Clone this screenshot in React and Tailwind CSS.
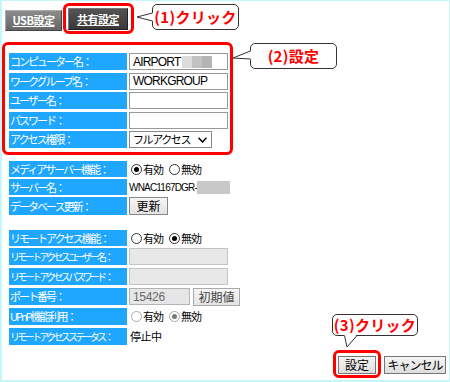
const jp = { fontFamily: '"Noto Sans CJK JP", "Liberation Sans", sans-serif' };
const latin = { fontFamily: '"Liberation Sans", Arial, sans-serif' };

function Label({ children, small }) {
  return (
    <div
      className={
        small
          ? 'w-[118px] h-full shrink-0 bg-[#1fa6ff] text-white flex items-center pl-[1px] text-[10px] tracking-[-2.7px] whitespace-nowrap overflow-hidden'
          : 'w-[118px] h-full shrink-0 bg-[#1fa6ff] text-white flex items-center pl-[1px] text-[11px] tracking-[-2px] whitespace-nowrap overflow-hidden'
      }
    >
      {children}
    </div>
  );
}

function Radio({ checked, disabled }) {
  return (
    <span
      className={
        disabled
          ? 'w-[11px] h-[11px] shrink-0 rounded-full border border-[#a8a8a8] bg-white flex items-center justify-center'
          : 'w-[11px] h-[11px] shrink-0 rounded-full border border-[#333] bg-white flex items-center justify-center'
      }
    >
      {checked && (
        <span className={disabled ? 'w-[5px] h-[5px] rounded-full bg-[#777]' : 'w-[5px] h-[5px] rounded-full bg-black'} />
      )}
    </span>
  );
}

function RadioPair({ on, disabled }) {
  return (
    <div className="flex items-center ml-[2px] text-[11px] tracking-[-1px] text-black">
      <Radio checked={on} disabled={disabled} />
      <span className="ml-[1px] w-[26px]">有効</span>
      <Radio checked={!on} disabled={disabled} />
      <span className="ml-[1px]">無効</span>
    </div>
  );
}

function Row({ h, children }) {
  return <div className={`flex gap-[2px] items-center ${h}`}>{children}</div>;
}

function Bubble({ children, className }) {
  return (
    <div
      className={`absolute bg-white border border-[#333] rounded-[5px] flex items-center justify-center text-[15px] font-bold text-[#ff0000] tracking-[0.3px] ${className}`}
      style={jp}
    >
      {children}
    </div>
  );
}

export default function App() {
  return (
    <div className="relative w-[450px] h-[382px] overflow-hidden bg-white" style={jp}>
      <div className="w-full h-full border-l-2 border-b-2 border-t border-r border-[#c6f6f8] flex flex-col">
        {/* tabs */}
        <div className="flex items-start mt-[7px] ml-[3px]">
          <div className="mt-[2px] w-[57px] h-[21px] bg-gradient-to-b from-[#8c8c8c] to-[#666] border-t border-l border-[#aaa] border-r border-b border-r-[#444] border-b-[#444] flex items-center justify-center">
            <span className="text-white text-[11px] font-bold underline tracking-[-0.5px]">USB設定</span>
          </div>
          <div className="ml-[6px] w-[60px] h-[22px] bg-gradient-to-b from-[#555] to-[#383838] border-t border-l border-[#777] border-r border-b border-r-[#222] border-b-[#222] flex items-center justify-center">
            <span className="text-white text-[11px] font-bold underline tracking-[-0.5px]">共有設定</span>
          </div>
        </div>

        {/* section 1 */}
        <div className="mt-[22px] ml-[7px] flex flex-col gap-[2.5px]">
          <Row h="h-[17px]">
            <Label>コンピューター名：</Label>
            <div className="w-[99px] h-full border border-[#999] bg-white flex items-center pl-[3px]">
              <span className="text-[12px] tracking-[-0.8px] text-black" style={latin}>AIRPORT</span>
              <span className="ml-[1px] flex h-[12px]">
                <span className="w-[10px] h-full bg-[#dcdcdc]" />
                <span className="w-[10px] h-full bg-[#c2c2c2]" />
                <span className="w-[10px] h-full bg-[#b4b4b4]" />
              </span>
            </div>
          </Row>
          <Row h="h-[17px]">
            <Label>ワークグループ名：</Label>
            <div className="w-[99px] h-full border border-[#999] bg-white flex items-center pl-[3px]">
              <span className="text-[12px] tracking-[-0.8px] text-black" style={latin}>WORKGROUP</span>
            </div>
          </Row>
          <Row h="h-[17px]">
            <Label>ユーザー名：</Label>
            <div className="w-[99px] h-full border border-[#999] bg-white" />
          </Row>
          <Row h="h-[17px]">
            <Label>パスワード：</Label>
            <div className="w-[99px] h-full border border-[#999] bg-white" />
          </Row>
          <Row h="h-[17px]">
            <Label>アクセス権限：</Label>
            <div className="w-[83px] h-full border border-[#888] bg-white flex items-center justify-between pl-[3px] pr-[4px]">
              <span className="text-[11px] tracking-[-1.4px] text-black">フルアクセス</span>
              <svg width="9" height="6" viewBox="0 0 9 6">
                <polyline points="0.5,0.8 4.5,5 8.5,0.8" fill="none" stroke="#000" strokeWidth="1.5" />
              </svg>
            </div>
          </Row>
        </div>

        {/* section 2 */}
        <div className="mt-[13px] ml-[7px] flex flex-col gap-[2px]">
          <Row h="h-[16px]">
            <Label>メディアサーバー機能：</Label>
            <RadioPair on />
          </Row>
          <Row h="h-[16px]">
            <Label>サーバー名：</Label>
            <div className="flex items-center">
              <span className="text-[10px] tracking-[-0.8px] text-black" style={latin}>WNAC1167DGR-</span>
              <span className="w-[33px] h-[13px] bg-[#c8c8c8]" />
            </div>
          </Row>
          <Row h="h-[18px]">
            <Label>データベース更新：</Label>
            <button className="w-[39px] h-[18px] border border-[#888] bg-gradient-to-b from-[#f6f6f6] to-[#e2e2e2] text-[12px] text-black leading-none">
              更新
            </button>
          </Row>
        </div>

        {/* section 3 */}
        <div className="mt-[15px] ml-[7px] flex flex-col">
          <Row h="h-[16px]">
            <Label>リモートアクセス機能：</Label>
            <RadioPair on={false} />
          </Row>
          <div className="mt-[2px] flex flex-col gap-[3px]">
            <Row h="h-[17px]">
              <Label small>リモートアクセスユーザー名：</Label>
              <div className="w-[99px] h-full border border-[#c4c4c4] bg-[#e8e8e8]" />
            </Row>
            <Row h="h-[17px]">
              <Label small>リモートアクセスパスワード：</Label>
              <div className="w-[99px] h-full border border-[#c4c4c4] bg-[#e8e8e8]" />
            </Row>
            <Row h="h-[17px]">
              <Label>ポート番号：</Label>
              <div className="w-[61px] h-full border border-[#b4b4b4] bg-[#e6e6e6] flex items-center pl-[3px]">
                <span className="text-[12px] text-[#6a6a6a] tracking-[-0.3px]" style={latin}>15426</span>
              </div>
              <button className="ml-[1px] w-[47px] h-[18px] border border-[#aaa] bg-gradient-to-b from-[#f6f6f6] to-[#e4e4e4] text-[12px] text-[#444] leading-none">
                初期値
              </button>
            </Row>
            <Row h="h-[17px]">
              <Label>UPnP機能利用：</Label>
              <RadioPair on={false} disabled />
            </Row>
            <Row h="h-[17px]">
              <Label small>リモートアクセスステータス：</Label>
              <span className="ml-[1px] text-[11px] tracking-[-0.5px] text-black">停止中</span>
            </Row>
          </div>
        </div>

        {/* buttons */}
        <div className="mt-[11px] mr-[3px] flex justify-end gap-[8px]">
          <button className="w-[38px] h-[18px] border border-[#777] bg-gradient-to-b from-[#f6f6f6] to-[#dedede] text-[12px] text-black leading-none">
            設定
          </button>
          <button className="w-[62px] h-[18px] border border-[#777] bg-gradient-to-b from-[#f6f6f6] to-[#dedede] text-[12px] text-black leading-none tracking-[-1px]">
            キャンセル
          </button>
        </div>
      </div>

      {/* red highlights */}
      <div className="absolute left-[63px] top-[3px] w-[71px] h-[31px] border-[3px] border-[#ff0000] rounded-[6px]" />
      <div className="absolute left-[2px] top-[42px] w-[231px] h-[113px] border-[3px] border-[#ff0000] rounded-[6px]" />
      <div className="absolute left-[333px] top-[350px] w-[48px] h-[28px] border-[3px] border-[#ff0000] rounded-[6px]" />

      {/* callouts */}
      <Bubble className="left-[152px] top-[4px] w-[87px] h-[26px]">(1)クリック</Bubble>
      <svg className="absolute left-[136px] top-[10px]" width="18" height="14" viewBox="0 0 18 14">
        <polygon points="1,7 18,2.5 18,11.5" fill="#fff" />
        <polyline points="16.5,3 1,7 16.5,11" fill="none" stroke="#333" strokeWidth="1" />
      </svg>

      <Bubble className="left-[250px] top-[43px] w-[87px] h-[26px]">(2)設定</Bubble>
      <svg className="absolute left-[232px] top-[49px]" width="20" height="12" viewBox="0 0 20 12">
        <polygon points="1,9 20,1.5 20,10.5" fill="#fff" />
        <polyline points="18.5,2 1,9 18.5,10" fill="none" stroke="#333" strokeWidth="1" />
      </svg>

      <Bubble className="left-[332px] top-[314px] w-[86px] h-[22px]">(3)クリック</Bubble>
      <svg className="absolute left-[340px] top-[333px]" width="20" height="16" viewBox="0 0 20 16">
        <polygon points="3.5,0 18,0 7,14" fill="#fff" />
        <polyline points="4.5,2.5 7,14 17,2.5" fill="none" stroke="#333" strokeWidth="1" />
      </svg>
    </div>
  );
}
